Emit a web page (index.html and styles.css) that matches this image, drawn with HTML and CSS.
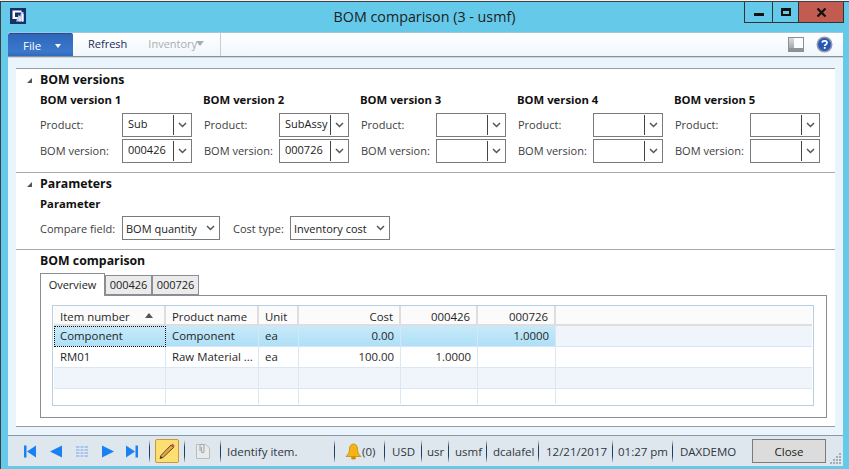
FILE: index.html
```html
<!DOCTYPE html>
<html lang="en">
<head>
<meta charset="utf-8">
<title>BOM comparison</title>
<link rel="stylesheet" href="styles.css">
</head>
<body>
<div class="window">
  <header class="titlebar">
    <div class="title-left">
      <svg class="app-icon" width="16" height="16" viewBox="0 0 16 16"><rect width="16" height="16" fill="#16306b"/><path d="M2.500 2.500H11.500V4.500H5V9H8V11H2.500Z" fill="#fff"/><path d="M6 13.500L9 6L10 10L11 4H13.500V13.500Z" fill="#b9cde6"/><path d="M9.500 13.500V8H10.500V13.500ZM12 13.500V6H13.500V13.500Z" fill="#fff"/></svg>
    </div>
    <div class="title">BOM comparison (3 - usmf)</div>
    <div class="winbtns">
      <div class="winbtn min"><span class="min-glyph"></span></div>
      <div class="winbtn max"><span class="max-glyph"></span></div>
      <div class="winbtn close-x"><svg width="11" height="9" viewBox="0 0 11 9"><path d="M1.500 0.500L9.500 8.500M9.500 0.500L1.500 8.500" stroke="#111" stroke-width="2.200" fill="none"/></svg></div>
    </div>
  </header>
  <div class="client">
    <nav class="toolbar">
      <button class="file-btn">File <span class="file-caret"></span></button>
      <span class="tool refresh">Refresh</span>
      <span class="tool inventory">Inventory<span class="inv-caret"></span></span>
      <span class="tool-sep"></span>
      <span class="tool-spacer"></span>
      <svg class="layout-icon" width="16" height="15" viewBox="0 0 16 15"><defs><linearGradient id="lg" x1="0" y1="0" x2="0" y2="1"><stop offset="0" stop-color="#d9dcdf"/><stop offset="1" stop-color="#a4a9ae"/></linearGradient></defs><rect x="0.500" y="0.500" width="15" height="14" fill="#fbfcfd" stroke="#8a8f94"/><rect x="1" y="1" width="5" height="10" fill="url(#lg)"/><rect x="1" y="11" width="14" height="3" fill="#8e9499"/></svg>
      <svg class="help-icon" width="17" height="17" viewBox="0 0 17 17"><circle cx="8.500" cy="8.500" r="8" fill="#8f9bb0"/><circle cx="8.500" cy="8.500" r="6.500" fill="#2a56b5"/><path d="M6.200 6.600C6.400 4.400 11 4.300 11 6.800C11 8.500 8.700 8.400 8.700 10" stroke="#fff" stroke-width="1.700" fill="none"/><rect x="7.800" y="11" width="1.800" height="1.800" fill="#fff"/></svg>
    </nav>
    <main class="panel">
      <section class="sec sec-versions">
        <h2 class="sec-head"><span class="tri"></span>BOM versions</h2>
        <div class="versions">
          <div class="vgroup v1">
            <h3 class="group-title">BOM version 1</h3>
            <div class="vrow"><span class="lbl">Product:</span><div class="combo"><span class="val">Sub</span><span class="drop"><svg class="chev" width="9" height="6" viewBox="0 0 9 6"><path d="M1 1L4.500 4.500L8 1" stroke="#555" stroke-width="1.500" fill="none"/></svg></span></div></div>
            <div class="vrow"><span class="lbl">BOM version:</span><div class="combo"><span class="val">000426</span><span class="drop"><svg class="chev" width="9" height="6" viewBox="0 0 9 6"><path d="M1 1L4.500 4.500L8 1" stroke="#555" stroke-width="1.500" fill="none"/></svg></span></div></div>
          </div>
          <div class="vgroup v2">
            <h3 class="group-title">BOM version 2</h3>
            <div class="vrow"><span class="lbl">Product:</span><div class="combo"><span class="val">SubAssy</span><span class="drop"><svg class="chev" width="9" height="6" viewBox="0 0 9 6"><path d="M1 1L4.500 4.500L8 1" stroke="#555" stroke-width="1.500" fill="none"/></svg></span></div></div>
            <div class="vrow"><span class="lbl">BOM version:</span><div class="combo"><span class="val">000726</span><span class="drop"><svg class="chev" width="9" height="6" viewBox="0 0 9 6"><path d="M1 1L4.500 4.500L8 1" stroke="#555" stroke-width="1.500" fill="none"/></svg></span></div></div>
          </div>
          <div class="vgroup v2">
            <h3 class="group-title">BOM version 3</h3>
            <div class="vrow"><span class="lbl">Product:</span><div class="combo"><span class="val"></span><span class="drop"><svg class="chev" width="9" height="6" viewBox="0 0 9 6"><path d="M1 1L4.500 4.500L8 1" stroke="#555" stroke-width="1.500" fill="none"/></svg></span></div></div>
            <div class="vrow"><span class="lbl">BOM version:</span><div class="combo"><span class="val"></span><span class="drop"><svg class="chev" width="9" height="6" viewBox="0 0 9 6"><path d="M1 1L4.500 4.500L8 1" stroke="#555" stroke-width="1.500" fill="none"/></svg></span></div></div>
          </div>
          <div class="vgroup v2">
            <h3 class="group-title">BOM version 4</h3>
            <div class="vrow"><span class="lbl">Product:</span><div class="combo"><span class="val"></span><span class="drop"><svg class="chev" width="9" height="6" viewBox="0 0 9 6"><path d="M1 1L4.500 4.500L8 1" stroke="#555" stroke-width="1.500" fill="none"/></svg></span></div></div>
            <div class="vrow"><span class="lbl">BOM version:</span><div class="combo"><span class="val"></span><span class="drop"><svg class="chev" width="9" height="6" viewBox="0 0 9 6"><path d="M1 1L4.500 4.500L8 1" stroke="#555" stroke-width="1.500" fill="none"/></svg></span></div></div>
          </div>
          <div class="vgroup v2">
            <h3 class="group-title">BOM version 5</h3>
            <div class="vrow"><span class="lbl">Product:</span><div class="combo"><span class="val"></span><span class="drop"><svg class="chev" width="9" height="6" viewBox="0 0 9 6"><path d="M1 1L4.500 4.500L8 1" stroke="#555" stroke-width="1.500" fill="none"/></svg></span></div></div>
            <div class="vrow"><span class="lbl">BOM version:</span><div class="combo"><span class="val"></span><span class="drop"><svg class="chev" width="9" height="6" viewBox="0 0 9 6"><path d="M1 1L4.500 4.500L8 1" stroke="#555" stroke-width="1.500" fill="none"/></svg></span></div></div>
          </div>
        </div>
      </section>
      <section class="sec sec-params">
        <h2 class="sec-head"><span class="tri"></span>Parameters</h2>
        <h3 class="group-title param-title">Parameter</h3>
        <div class="param-row">
          <span class="lbl lbl-compare">Compare field:</span>
          <div class="select compare"><span>BOM quantity</span><svg class="chev" width="9" height="6" viewBox="0 0 9 6"><path d="M1 1L4.500 4.500L8 1" stroke="#555" stroke-width="1.500" fill="none"/></svg></div>
          <span class="lbl lbl-cost">Cost type:</span>
          <div class="select cost"><span>Inventory cost</span><svg class="chev" width="9" height="6" viewBox="0 0 9 6"><path d="M1 1L4.500 4.500L8 1" stroke="#555" stroke-width="1.500" fill="none"/></svg></div>
        </div>
      </section>
      <section class="sec sec-compare">
        <h2 class="sec-head plain">BOM comparison</h2>
        <div class="tabs">
          <span class="tab active">Overview</span>
          <span class="tab">000426</span>
          <span class="tab">000726</span>
        </div>
        <div class="tab-body">
          <div class="grid">
            <div class="row head">
              <div class="cell c1">Item number<span class="sort"></span></div>
              <div class="cell c2">Product name</div>
              <div class="cell c3">Unit</div>
              <div class="cell c4 num">Cost</div>
              <div class="cell c5 num">000426</div>
              <div class="cell c6 num">000726</div>
              <div class="cell fill"></div>
            </div>
            <div class="row selected">
              <div class="cell c1 focus">Component</div>
              <div class="cell c2">Component</div>
              <div class="cell c3">ea</div>
              <div class="cell c4 num">0.00</div>
              <div class="cell c5 num"></div>
              <div class="cell c6 num">1.0000</div>
              <div class="cell fill"></div>
            </div>
            <div class="row">
              <div class="cell c1">RM01</div>
              <div class="cell c2">Raw Material ...</div>
              <div class="cell c3">ea</div>
              <div class="cell c4 num">100.00</div>
              <div class="cell c5 num">1.0000</div>
              <div class="cell c6 num"></div>
              <div class="cell fill"></div>
            </div>
            <div class="row tinted">
              <div class="cell c1"></div><div class="cell c2"></div><div class="cell c3"></div><div class="cell c4"></div><div class="cell c5"></div><div class="cell c6"></div><div class="cell fill"></div>
            </div>
            <div class="row last">
              <div class="cell c1"></div><div class="cell c2"></div><div class="cell c3"></div><div class="cell c4"></div><div class="cell c5"></div><div class="cell c6"></div><div class="cell fill"></div>
            </div>
          </div>
        </div>
      </section>
    </main>
    <footer class="status">
      <div class="nav-icons">
        <svg width="12" height="13" viewBox="0 0 12 13"><rect x="0" y="0.500" width="2.500" height="12" fill="#1b80f2"/><path d="M12 0.500V12.500L3 6.500Z" fill="#1b80f2"/></svg>
        <svg width="12" height="13" viewBox="0 0 12 13"><path d="M12 0.500V12.500L0 6.500Z" fill="#1b80f2"/></svg>
        <svg width="12" height="13" viewBox="0 0 12 13"><path d="M0 1H12V12H0Z" fill="#a9c4ee"/><path d="M4 1V12M8 1V12M0 3.500H12M0 6.500H12M0 9.500H12" stroke="#e1e8f0" stroke-width="1"/></svg>
        <svg width="12" height="13" viewBox="0 0 12 13"><path d="M0 0.500V12.500L12 6.500Z" fill="#1b80f2"/></svg>
        <svg class="nav-last" width="12" height="13" viewBox="0 0 12 13"><path d="M0 0.500V12.500L9 6.500Z" fill="#1b80f2"/><rect x="9.500" y="0.500" width="2.500" height="12" fill="#1b80f2"/></svg>
      </div>
      <span class="sb-sep"></span>
      <div class="pencil-btn"><svg width="18" height="18" viewBox="0 0 18 18"><path d="M3 13.500L13 3L15.500 5.500L5 15.500L2 16.500Z" fill="#e7a83b" stroke="#5a4a36" stroke-width="1"/><path d="M13 3L14.500 1.500L16.800 4L15.500 5.500Z" fill="#c9575b"/><path d="M2 16.500L2.800 14L4.500 15.700Z" fill="#333"/></svg></div>
      <span class="sb-sep"></span>
      <div class="note-slot"><svg width="14" height="16" viewBox="0 0 14 16"><path d="M0.500 1.500H9.500L13.500 5V15.500H0.500Z" fill="#e9eaeb" stroke="#b9bcbf"/><path d="M4 8V2.500C4 0.800 8 0.800 8 2.500V8.500C8 10 5.500 10 5.500 8.500V4" fill="none" stroke="#a9acaf" stroke-width="1.200"/></svg></div>
      <span class="sb-sep"></span>
      <span class="sb-item s-msg">Identify item.</span>
      <span class="sb-sep"></span>
      <span class="sb-item s-bell"><svg width="17" height="17" viewBox="0 0 17 17"><path d="M8.500 1C11 1 12.500 3 12.500 6C12.500 10 14 11.500 16 13.500H1C3 11.500 4.500 10 4.500 6C4.500 3 6 1 8.500 1Z" fill="#f4b413" stroke="#c68a0c" stroke-width="0.800"/><ellipse cx="8.500" cy="15" rx="2.500" ry="1.500" fill="#cb8c0e"/></svg>(0)</span>
      <span class="sb-sep"></span>
      <span class="sb-item s-usd">USD</span>
      <span class="sb-sep"></span>
      <span class="sb-item s-usr">usr</span>
      <span class="sb-sep"></span>
      <span class="sb-item s-usmf">usmf</span>
      <span class="sb-sep"></span>
      <span class="sb-item s-user">dcalafel</span>
      <span class="sb-sep"></span>
      <span class="sb-item s-date">12/21/2017</span>
      <span class="sb-sep"></span>
      <span class="sb-item s-time">01:27 pm</span>
      <span class="sb-sep"></span>
      <span class="sb-item s-db">DAXDEMO</span>
      <button class="close-btn">Close</button>
      <svg class="grip" width="12" height="12" viewBox="0 0 12 12"><g fill="#a4acb4"><rect x="9" y="0" width="2" height="2"/><rect x="6" y="3" width="2" height="2"/><rect x="9" y="3" width="2" height="2"/><rect x="3" y="6" width="2" height="2"/><rect x="6" y="6" width="2" height="2"/><rect x="9" y="6" width="2" height="2"/><rect x="0" y="9" width="2" height="2"/><rect x="3" y="9" width="2" height="2"/><rect x="6" y="9" width="2" height="2"/><rect x="9" y="9" width="2" height="2"/></g></svg>
    </footer>
  </div>
</div>
</body>
</html>
```

FILE: styles.css
```css
* { box-sizing: border-box; }
html, body { margin: 0; padding: 0; }
body {
  width: 849px;
  height: 469px;
  overflow: hidden;
  background: #f0f0f0;
  font-family: "Open Sans", "Liberation Sans", sans-serif;
  font-size: 11px;
  color: #222;
  padding-top: 1px;
}
.window {
  height: 468px;
  background: #65c9ea;
  border-top: 1px solid #3c3f44;
  border-left: 1px solid #3c3f44;
  display: flex;
  flex-direction: column;
}
.titlebar {
  height: 30px;
  display: grid;
  grid-template-columns: 1fr auto 1fr;
  flex: none;
}
.title-left { padding: 6px 0 0 9px; }
.app-icon { display: block; }
.title {
  font-size: 14.3px;
  color: #1d1d1d;
  line-height: 29px;
  padding-right: 1px;
}
.winbtns { display: flex; justify-content: flex-end; padding-right: 5px; height: 21px; }
.winbtn {
  height: 21px;
  border: 1px solid #30343a;
  border-top: 0;
  border-right: 0;
  display: flex;
  align-items: center;
  justify-content: center;
}
.min { width: 28px; }
.max { width: 26px; }
.close-x { width: 46px; background: #c25b50; border-right: 1px solid #30343a; }
.min-glyph { width: 10px; height: 3px; background: #111; margin-top: 5px; }
.max-glyph { width: 10px; height: 8px; border: 2px solid #111; border-top-width: 3px; }
.client {
  flex: 1;
  margin: 0 6px 4px 7px;
  background: #e9f4fd;
  display: flex;
  flex-direction: column;
  min-height: 0;
}
.toolbar {
  height: 25px;
  flex: none;
  display: flex;
  align-items: center;
  background: linear-gradient(#fff, #f0f6fc);
  border-top: 1px solid #a5c6d8;
  border-bottom: 1px solid #8b9299;
  box-shadow: 0 1px 0 #cfd6dc;
}
.file-btn {
  width: 65px;
  height: 23px;
  flex: none;
  align-self: flex-end;
  border: 0;
  border-top: 1px solid #1e4ea0;
  border-radius: 2px 2px 0 0;
  background: linear-gradient(#2e67ba, #3a78cc 80%, #2f69bc);
  color: #fff;
  font: 11.5px "Open Sans", sans-serif;
  display: flex;
  align-items: center;
  padding: 0 0 0 15px;
}
.file-caret {
  border: 3.5px solid transparent;
  border-top: 4px solid #fff;
  border-bottom: 0;
  margin-left: 14px;
  margin-top: 2px;
}
.tool { font-size: 11px; white-space: nowrap; position: relative; top: -1px; }
.refresh { color: #1b2a58; margin-left: 15px; }
.inventory { color: #a9adb2; margin-left: 21px; display: flex; align-items: center; }
.inv-caret { border: 4px solid transparent; border-top: 5px solid #a9adb2; border-bottom: 0; margin-left: -1px; }
.tool-sep { width: 1px; align-self: stretch; background: #c8cdd2; margin-left: 16px; }
.tool-spacer { flex: 1; }
.layout-icon { margin-right: 12px; }
.help-icon { margin-right: 10px; }
.panel {
  margin: 11px 8px 0 8px;
  height: 359px;
  flex: none;
  background: #fff;
  border-top: 1px solid #9a9da0;
  border-bottom: 1px solid #9a9da0;
  display: flex;
  flex-direction: column;
}
.sec { border-bottom: 1px solid #a8abae; flex: none; }
.sec-versions { height: 104px; }
.sec-params { height: 77px; }
.sec-compare { border-bottom: 0; flex: 1; padding-left: 24px; min-height: 0; }
.sec-head {
  margin: 0;
  font-size: 12.3px;
  font-weight: 700;
  color: #111;
  height: 22px;
  line-height: 21px;
  padding-left: 24px;
  position: relative;
}
.sec-compare .sec-head { padding-left: 0; }
.tri {
  position: absolute;
  left: 11px;
  top: 9px;
  width: 0;
  height: 0;
  border-left: 5px solid transparent;
  border-bottom: 5px solid #555;
}
.group-title { margin: 0; font-size: 11.3px; font-weight: 700; color: #111; height: 22px; line-height: 17px; }
.versions { display: flex; padding-left: 24px; }
.vgroup { flex: none; width: 157px; }
.v1 { width: 163px; }
.vrow { display: flex; align-items: center; height: 26px; padding-bottom: 3px; }
.lbl { color: #3d3d3d; white-space: nowrap; }
.v1 .lbl { width: 82px; }
.v2 .lbl { width: 76px; padding-left: 1px; }
.combo {
  width: 70px;
  height: 24px;
  border: 1px solid #7a7a7a;
  display: flex;
  background: #fff;
}
.val { flex: 1; padding: 2px 0 0 5px; color: #1a1a1a; line-height: 16px; overflow: hidden; }
.drop { width: 18px; border-left: 1px solid #444; margin: 1px 0; display: flex; align-items: center; justify-content: center; flex: none; }
.param-title { padding-left: 24px; height: 14px; line-height: 18px; }
.param-row { display: flex; align-items: center; padding: 0 0 0 24px; margin-top: 7px; }
.lbl-compare { width: 82px; }
.lbl-cost { margin-left: 13px; width: 57px; }
.select {
  height: 24px;
  border: 1px solid #7a7a7a;
  display: flex;
  align-items: center;
  justify-content: space-between;
  padding: 0 4px 0 3px;
  color: #1a1a1a;
}
.compare { width: 98px; }
.cost { width: 100px; }
.tabs { display: flex; height: 23px; align-items: flex-end; }
.tab {
  width: 47px;
  height: 20px;
  text-align: center;
  line-height: 18px;
  background: #ebebeb;
  border: 1px solid #8a8d92;
  color: #222;
}
.tab.active {
  width: 65px;
  height: 23px;
  background: #fff;
  border-bottom: 0;
  line-height: 21px;
  margin-bottom: -1px;
  position: relative;
  z-index: 1;
}
.tab-body {
  width: 787px;
  height: 123px;
  border: 1px solid #8a8d92;
  padding: 9px 12px 0 11px;
}
.grid { width: 762px; height: 101px; border: 1px solid #b8cfe2; padding: 0 1px; font-size: 11.4px; }
.row { display: flex; height: 20px; }
.cell {
  flex: none;
  padding: 0 6px;
  line-height: 19px;
  border-right: 1px solid #dbe8f4;
  border-bottom: 1px solid #dbe8f4;
  white-space: nowrap;
  color: #1f1f1f;
  position: relative;
}
.c1 { width: 112px; }
.c2 { width: 93px; }
.c3 { width: 40px; }
.c4 { width: 102px; }
.c5 { width: 77px; }
.c6 { width: 78px; }
.fill { flex: 1; border-right: 0; }
.num { text-align: right; }
.head .cell { background: #fbfbfb; border-color: #dedede; border-right-width: 2px; border-bottom-width: 2px; line-height: 22px; }
.head .fill { border-right: 0; }
.sort {
  position: absolute;
  left: 91px;
  top: 7px;
  border: 4px solid transparent;
  border-bottom: 5px solid #555;
  border-top: 0;
}
.selected .cell { background: linear-gradient(#c8eaf9, #aee0f7); border-color: #d6e6f4; }
.selected .fill { background: #f0f5fc; }
.selected .focus { outline: 1px dotted #111; outline-offset: -1px; }
.row + .row { height: 21px; }
.tinted .cell { background: #f0f5fc; }
.row.last { height: 15px; }
.last .cell { border-bottom: 0; }
.status {
  margin-top: 8px;
  height: 31px;
  flex: none;
  border-top: 1px solid #8e98a2;
  background: #dee6ee;
  display: flex;
  align-items: center;
  color: #2f3640;
  font-size: 11.5px;
  white-space: nowrap;
}
.nav-icons { display: flex; gap: 14px; padding-left: 16px; width: 141px; flex: none; }
.nav-last { margin-left: -2px; }
.sb-sep { width: 1px; height: 23px; background: linear-gradient(transparent, #1e3f66 30%, #1e3f66 70%, transparent); flex: none; }
.pencil-btn {
  width: 24px;
  height: 24px;
  flex: none;
  margin: 0 5px;
  background: #fddf71;
  border: 1px solid #c89a3c;
  border-radius: 2px;
  display: flex;
  align-items: center;
  justify-content: center;
}
.note-slot { width: 35px; flex: none; display: flex; justify-content: center; }
.sb-item { flex: none; }
.s-msg { width: 113px; padding-left: 6px; }
.s-bell { width: 49px; padding-left: 10px; display: flex; align-items: center; }
.s-usd { width: 36px; padding-left: 7px; }
.s-usr { width: 26px; padding-left: 5px; }
.s-usmf { width: 37px; padding-left: 6px; }
.s-user { width: 51px; padding-left: 6px; }
.s-date { width: 73px; padding-left: 7px; }
.s-time { width: 59px; padding-left: 5px; }
.s-db { width: 79px; padding-left: 7px; }
.close-btn {
  width: 74px;
  height: 24px;
  flex: none;
  background: #dcdcdc;
  border: 1px solid #7c7c7c;
  font: 11.5px "Open Sans", sans-serif;
  color: #222;
  padding: 0;
}
.grip { flex: none; margin-left: 4px; align-self: flex-end; margin-bottom: 1px; }
```
